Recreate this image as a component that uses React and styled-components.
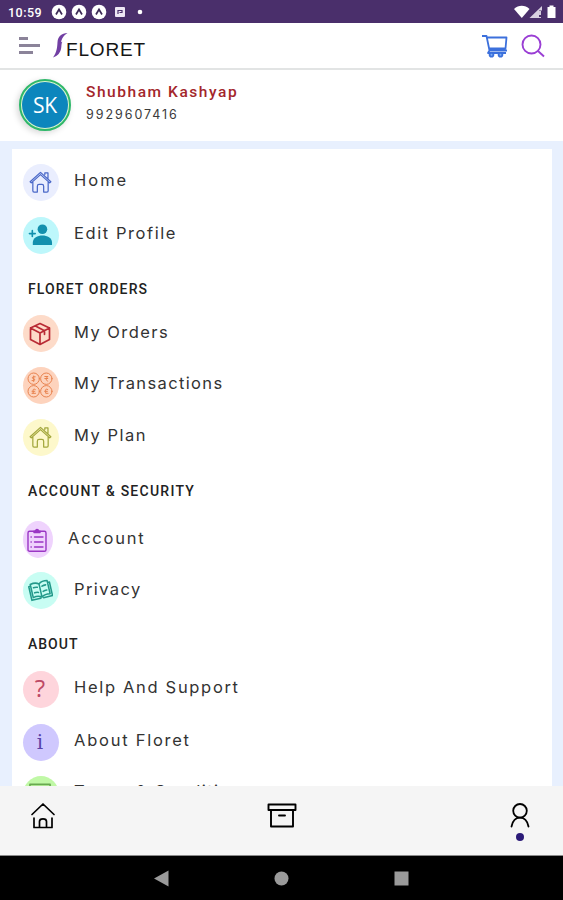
import styled, { createGlobalStyle } from "styled-components"

const GlobalStyle = createGlobalStyle`
    *{
        box-sizing:border-box;
    }
    body{
        margin:0;
        background:#fff;
        font-family:Inter, "Open Sans", sans-serif;
    }
    svg{
        display:block;
        flex-shrink:0;
    }
`

const Screen = styled.div`
    width:563px;
    height:900px;
    display:flex;
    flex-direction:column;
    overflow:hidden;
`

const StatusBar = styled.div`
    height:23px;
    flex-shrink:0;
    display:flex;
    align-items:center;
    justify-content:space-between;
    padding:1px 6px 0 8px;
    background:#4a2f6b;
    color:#fff;
`

const StatusGroup = styled.div`
    display:flex;
    align-items:center;
`

const Clock = styled.span`
    width:43px;
    font-family:Roboto, sans-serif;
    font-size:12.5px;
    font-weight:500;
    letter-spacing:0.5px;
`

const Header = styled.header`
    height:47px;
    flex-shrink:0;
    display:flex;
    align-items:center;
    justify-content:space-between;
    padding:0 18px 0 19px;
    border-bottom:2px solid #e2e4e4;
`

const HeaderGroup = styled.div`
    display:flex;
    align-items:center;
    gap:${(props) => props.$gap || 0}px;
`

const Brand = styled.span`
    padding-top:8px;
    margin-left:-2px;
    font-family:"Liberation Sans", sans-serif;
    font-size:19px;
    line-height:22px;
    letter-spacing:0.85px;
    color:#151515;
`

const Profile = styled.section`
    height:71px;
    flex-shrink:0;
    display:flex;
    align-items:flex-start;
    padding:9px 19px;
    gap:15px;
`

const Avatar = styled.div`
    width:52px;
    height:52px;
    padding:1px;
    border-radius:50%;
    border:2px solid #2fb86a;
    background:#d9f5d0;
    box-shadow:-2px 2px 6px rgba(0,0,0,0.16);
`

const Initials = styled.div`
    width:100%;
    height:100%;
    display:flex;
    align-items:center;
    justify-content:center;
    border-radius:50%;
    background:#0c86bd;
    color:#fff;
    font-family:"Open Sans", sans-serif;
    font-size:21px;
    letter-spacing:-0.3px;
`

const UserName = styled.div`
    padding-top:3px;
    font-family:Roboto, sans-serif;
    font-size:15.5px;
    font-weight:500;
    line-height:20px;
    letter-spacing:1.55px;
    color:#a3262b;
`

const Phone = styled.div`
    padding-top:4px;
    font-size:12.5px;
    line-height:17px;
    letter-spacing:1.95px;
    color:#3b3b3b;
`

const Content = styled.main`
    flex:1;
    min-height:0;
    overflow:hidden;
    padding:8px 11px 0 12px;
    background:#e8f0fe;
`

const Card = styled.div`
    padding:7px 11px 0;
    background:#fff;
`

const Row = styled.div`
    height:${(props) => props.$height}px;
    display:flex;
    align-items:center;
    gap:15px;
`

const Bubble = styled.div`
    width:${(props) => (props.$narrow ? 30 : 36)}px;
    height:37px;
    flex-shrink:0;
    display:flex;
    align-items:center;
    justify-content:center;
    padding-right:2px;
    border-radius:50%;
    background:${(props) => props.$bg};
    color:${(props) => props.$color};
`

const Label = styled.span`
    padding-bottom:${(props) => props.$lift || 4}px;
    font-size:16.5px;
    line-height:22px;
    letter-spacing:${(props) => props.$spacing}px;
    white-space:nowrap;
    color:#333;
`

const SectionTitle = styled.h2`
    height:${(props) => props.$height}px;
    margin:0;
    padding:${(props) => props.$top}px 0 0 5px;
    font-family:Roboto, sans-serif;
    font-size:14px;
    font-weight:500;
    line-height:16px;
    letter-spacing:${(props) => props.$spacing}px;
    color:#222;
`

const TabBar = styled.nav`
    height:70px;
    flex-shrink:0;
    display:flex;
    align-items:flex-start;
    justify-content:space-between;
    padding:16px 30px 0;
    background:#f5f5f5;
    border-bottom:1px solid #8a8a8a;
`

const Tab = styled.div`
    display:flex;
    flex-direction:column;
    align-items:center;
    gap:4px;
`

const ActiveDot = styled.span`
    width:8px;
    height:8px;
    border-radius:50%;
    background:#2b1a78;
`

const SystemBar = styled.div`
    height:44px;
    flex-shrink:0;
    display:flex;
    align-items:center;
    justify-content:center;
    gap:105px;
    background:#000;
`

const Glyph = styled.span`
    font-family:"${(props) => props.$font || "Open Sans"}", sans-serif;
    font-size:${(props) => props.$size}px;
    line-height:1;
    padding-bottom:${(props) => props.$lift || 0}px;
`

function Icon({ w = 24, h = 24, box = "0 0 24 24", stroke = 1.4, children }) {
    return (
        <svg
            width={w}
            height={h}
            viewBox={box}
            fill="none"
            stroke="currentColor"
            strokeWidth={stroke}
            strokeLinecap="round"
            strokeLinejoin="round"
        >
            {children}
        </svg>
    )
}

function HouseIcon() {
    return (
        <Icon w={23} h={23} stroke={1.3}>
            <path d="M1.2 11.200 12 1.400l10.800 9.800-1.200 1.200L12 3.800l-9.600 8.600zM16.500 3.700V2h3.300v5.500M4 11.500v9.200c0 .8.500 1.300 1.300 1.300h3.400v-6.200c0-1.200.7-1.900 1.800-1.900h3c1.100 0 1.800.7 1.800 1.900V22h3.400c.8 0 1.300-.5 1.300-1.300v-9.200" />
        </Icon>
    )
}

function PersonAddIcon() {
    return (
        <Icon w={25} h={24} box="1 1 26 24" stroke={1.700}>
            <circle cx="16" cy="7" r="5" fill="currentColor" stroke="none" />
            <path d="M6 21c0-5 5-7.500 10-7.500S26 16 26 21v2.500H6z" fill="currentColor" stroke="none" />
            <path d="M5.500 8.500v6M2.500 11.500h6" />
        </Icon>
    )
}

function BoxIcon() {
    return (
        <Icon w={22} h={24} box="0 0 22 24" stroke={1.700}>
            <path d="M11 1.500 20.500 6v11.500L11 22.500l-9.500-5V6zM1.500 6 11 11l9.500-5M11 11v11.500M6 3.800l9.500 5v3.500" />
        </Icon>
    )
}

function CoinsIcon() {
    return (
        <Icon w={26} h={26} box="0 0 26 26" stroke={1}>
            <circle cx="6.700" cy="6.700" r="5.700" />
            <circle cx="19.300" cy="6.700" r="5.700" />
            <circle cx="6.700" cy="19.300" r="5.700" />
            <circle cx="19.300" cy="19.300" r="5.700" />
            <path d="M8.200 4.800H6.500c-1.500 0-1.500 1.900 0 1.900s1.500 1.900 0 1.900H5M6.700 4v5.500M17.800 4.500h3M17.800 6.500h3M18.500 4.500c2 0 2 2 0 2l2 2.700M8.300 17.500c-2-1.200-2.600.2-2.100 1.800v2H5m1.200 0h2.300M5 19.300h2.800M20.800 17.500c-2-1.200-2.600.2-2.100 1.800v2h2.300M17.600 19.300h2.800" />
        </Icon>
    )
}

function ClipboardIcon() {
    return (
        <Icon w={20} h={24} box="0 0 20 24" stroke={1.400}>
            <rect x="1" y="3.300" width="18" height="20" rx="1.600" />
            <path d="M7 4.500V3.200h1.500C8.500 1 11.500 1 11.500 3.200H13v1.300z" fill="currentColor" />
            <path d="M7.500 9H16M7.500 14H16M7.500 19H16M4 9h.3M4 14h.3M4 19h.3" />
        </Icon>
    )
}

function BookIcon() {
    return (
        <Icon w={25} h={25} box="0 0 26 26" stroke={1.600}>
            <g transform="rotate(-13 13 13)">
                <path d="M13 6c-2.500-2-5.500-2.300-9-1.500v14c3.500-.8 6.500-.4 9 1.500 2.500-1.900 5.500-2.300 9-1.500v-14C18.500 3.700 15.500 4 13 6zM13 6v14M4 6.500H2V21h9.500M22 6.500h2V21h-9.500" />
                <path d="M6.500 8.500c1.500-.2 2.800 0 4 .5M6.500 14c1.500-.2 2.800 0 4 .5M19.500 8.500c-1.500-.2-2.800 0-4 .5M19.500 14c-1.500-.2-2.800 0-4 .5" />
            </g>
        </Icon>
    )
}

function FrameIcon() {
    return (
        <Icon w={22} stroke={1.800}>
            <path d="M1 1.500h22v19H1zM6 7h12M6 12h12" />
        </Icon>
    )
}

const groups = [
    {
        rows: [
            { text: "Home", height: 52, spacing: 2, bg: "#eaeefe", color: "#4a68c8", icon: <HouseIcon /> },
            { text: "Edit Profile", height: 54, spacing: 1.57, bg: "#bdf7fb", color: "#1290ad", icon: <PersonAddIcon /> },
        ],
    },
    {
        title: "FLORET ORDERS",
        height: 46,
        top: 19,
        spacing: 1.1,
        rows: [
            { text: "My Orders", height: 51, spacing: 1.45, bg: "#fddbc9", color: "#b92b35", icon: <BoxIcon /> },
            { text: "My Transactions", height: 52, spacing: 1.37, bg: "#fdd3bd", color: "#e8824e", icon: <CoinsIcon /> },
            { text: "My Plan", height: 52, spacing: 1.5, bg: "#fdf8cb", color: "#a3a73c", icon: <HouseIcon /> },
        ],
    },
    {
        title: "ACCOUNT & SECURITY",
        height: 51,
        top: 20,
        spacing: 1.25,
        rows: [
            { text: "Account", height: 51, spacing: 1.75, bg: "#efd3fd", color: "#9a35c4", icon: <ClipboardIcon />, narrow: true },
            { text: "Privacy", height: 51, spacing: 1.4, bg: "#c8fdf3", color: "#23998a", icon: <BookIcon /> },
        ],
    },
    {
        title: "ABOUT",
        height: 47,
        top: 20,
        spacing: 1,
        rows: [
            { text: "Help And Support", height: 52, spacing: 1.68, bg: "#fed5dc", color: "#bd4966", icon: <Glyph $size={24} $lift={2}>?</Glyph> },
            { text: "About Floret", height: 54, spacing: 1.75, bg: "#cfc8fe", color: "#5942a8", icon: <Glyph $size={20} $font="DejaVu Serif">i</Glyph> },
            { text: "Terms & Conditions", height: 50, spacing: 1.45, lift: 7, bg: "#c0f8a6", color: "#68a950", icon: <FrameIcon /> },
        ],
    },
]

function StatusIcons() {
    return (
        <svg width="94" height="16" viewBox="0 0 94 16">
            {[8, 28, 48].map((x) => (
                <g key={x}>
                    <circle cx={x} cy="8" r="7.300" fill="#fff" />
                    <path d={`M${x - 3} 10.500 ${x} 5.500l3 5`} fill="none" stroke="#3c2a55" strokeWidth="1.700" />
                </g>
            ))}
            <rect x="64" y="3" width="10" height="10" rx="1" fill="#eee7f4" />
            <path d="M67 10V6.500h4v2h-2.500" fill="none" stroke="#4a2f6b" strokeWidth="1.200" />
            <circle cx="89" cy="8" r="2.300" fill="#fff" />
        </svg>
    )
}

function SignalIcons() {
    return (
        <svg width="43" height="16" viewBox="0 0 43 16">
            <path d="M0 5C4.500.800 11 .800 15.500 5L7.800 14z" fill="#fff" />
            <path d="M15.500 14 28 2v12z" fill="#d8d0e0" />
            <path d="M25 6.500h3V14h-3z" fill="#4a2f6b" />
            <path d="M26 7v4M26 13v1" stroke="#fff" strokeWidth="1.500" />
            <path d="M33.500 3h2V1.500h4V3h2v11h-8z" fill="#fff" />
        </svg>
    )
}

export default function App() {
    return (
        <Screen>
            <GlobalStyle />
            <StatusBar>
                <StatusGroup>
                    <Clock>10:59</Clock>
                    <StatusIcons />
                </StatusGroup>
                <SignalIcons />
            </StatusBar>

            <Header>
                <HeaderGroup $gap={13}>
                    <svg width="21" height="19" viewBox="0 0 21 19">
                        <path d="M0 2.500h9M0 9.500h21M0 16.500h14" stroke="#8b8399" strokeWidth="3" />
                    </svg>
                    <HeaderGroup>
                        <svg width="15" height="28" viewBox="0 0 15 28">
                            <path d="M14.500 1C8.500 1.200 5 4.500 4.500 10 4.200 15 4 20 0 25.500c5-1.500 7.400-5 8.200-9.500.4-2.600.1-4 1.100-6.200C6.800 12 9 4 14.500 1z" fill="#713fa3" />
                        </svg>
                        <Brand>FLORET</Brand>
                    </HeaderGroup>
                </HeaderGroup>
                <HeaderGroup $gap={13}>
                    <svg width="26" height="24" viewBox="0 0 26 24" fill="none" stroke="#3c70dc" strokeWidth="1.800" strokeLinejoin="round">
                        <path d="M0 2h4.500l3 14.500H25M5 3.500h19.500l-1 11H7M7.500 16.500 6 19h18" />
                        <circle cx="9.500" cy="20.800" r="1.900" fill="#7fb0f4" />
                        <circle cx="18.500" cy="20.800" r="1.900" fill="#7fb0f4" />
                    </svg>
                    <svg width="24" height="24" viewBox="0 0 24 24" fill="none" stroke="#9a3ed4" strokeWidth="1.900">
                        <circle cx="10.500" cy="10.500" r="9" />
                        <path d="m17 17 6 5.500" />
                    </svg>
                </HeaderGroup>
            </Header>

            <Profile>
                <Avatar>
                    <Initials>SK</Initials>
                </Avatar>
                <div>
                    <UserName>Shubham Kashyap</UserName>
                    <Phone>9929607416</Phone>
                </div>
            </Profile>

            <Content>
                <Card>
                    {groups.map((group, i) => (
                        <div key={i}>
                            {group.title && (
                                <SectionTitle $height={group.height} $top={group.top} $spacing={group.spacing}>
                                    {group.title}
                                </SectionTitle>
                            )}
                            {group.rows.map((row) => (
                                <Row key={row.text} $height={row.height}>
                                    <Bubble $bg={row.bg} $color={row.color} $narrow={row.narrow}>
                                        {row.icon}
                                    </Bubble>
                                    <Label $spacing={row.spacing} $lift={row.lift}>{row.text}</Label>
                                </Row>
                            ))}
                        </div>
                    ))}
                </Card>
            </Content>

            <TabBar>
                <Tab>
                    <Icon w={26} h={28} box="0 0 26 28" stroke={1.700}>
                        <path d="M2 12.500 13 2l11 10.500M4 16v9.500h18V16M9.500 25v-5.500c0-3.500 7-3.500 7 0V25" />
                    </Icon>
                </Tab>
                <Tab>
                    <Icon w={30} h={28} box="0 0 30 28" stroke={1.900}>
                        <path d="M1.500 2.500h27v5.500h-27zM4 8v16.500h22V8M12 13.500h6" />
                    </Icon>
                </Tab>
                <Tab>
                    <Icon w={26} h={27} box="0 0 26 27" stroke={1.800}>
                        <circle cx="13" cy="8.800" r="6.800" />
                        <path d="M4.500 24.500c1.200-5.800 4-8.800 8.500-8.800s7.300 3 8.500 8.800" />
                    </Icon>
                    <ActiveDot />
                </Tab>
            </TabBar>

            <SystemBar>
                <svg width="15" height="17" viewBox="0 0 15 17">
                    <path d="M0 8.500 14.500.500v16z" fill="#9a9a9a" />
                </svg>
                <svg width="15" height="15" viewBox="0 0 15 15">
                    <circle cx="7.500" cy="7.500" r="7" fill="#9a9a9a" />
                </svg>
                <svg width="15" height="15" viewBox="0 0 15 15">
                    <path d="M.500.500h14v14h-14z" fill="#9a9a9a" />
                </svg>
            </SystemBar>
        </Screen>
    )
}
